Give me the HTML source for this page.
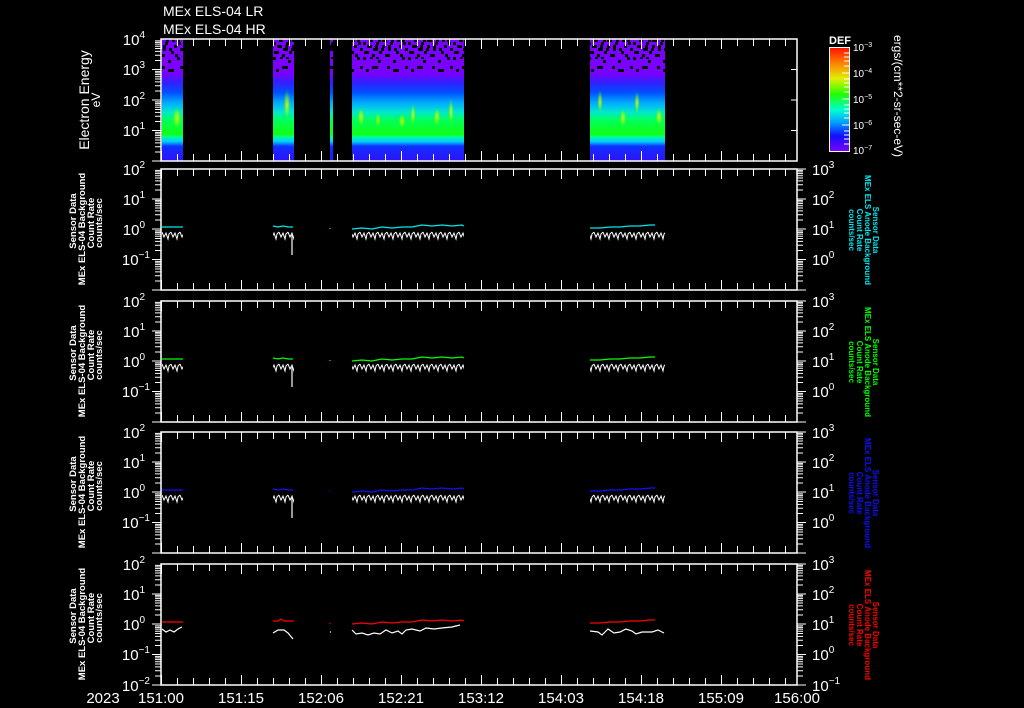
<!DOCTYPE html>
<html><head><meta charset="utf-8"><style>
html,body{margin:0;padding:0;background:#000;}
svg{display:block}
text{font-family:"Liberation Sans",sans-serif;fill:#fff}
</style></head><body>
<svg width="1024" height="708" viewBox="0 0 1024 708" xmlns="http://www.w3.org/2000/svg">
<defs>
<linearGradient id="sg" x1="0" y1="39" x2="0" y2="161" gradientUnits="userSpaceOnUse">
<stop offset="0" stop-color="#7a00ff"/>
<stop offset="0.28" stop-color="#7a00ff"/>
<stop offset="0.36" stop-color="#3020ff"/>
<stop offset="0.44" stop-color="#0050ff"/>
<stop offset="0.52" stop-color="#00a8ff"/>
<stop offset="0.6" stop-color="#00e8d0"/>
<stop offset="0.66" stop-color="#00ff60"/>
<stop offset="0.78" stop-color="#10ff10"/>
<stop offset="0.8" stop-color="#00ff90"/>
<stop offset="0.84" stop-color="#00d0ff"/>
<stop offset="0.88" stop-color="#1030ff"/>
<stop offset="1" stop-color="#3010ff"/>
</linearGradient>
<linearGradient id="cb" x1="0" y1="0" x2="0" y2="1">
<stop offset="0" stop-color="#ff1000"/>
<stop offset="0.15" stop-color="#ff8000"/>
<stop offset="0.3" stop-color="#e0f000"/>
<stop offset="0.45" stop-color="#20ff00"/>
<stop offset="0.6" stop-color="#00ffd0"/>
<stop offset="0.72" stop-color="#00a0ff"/>
<stop offset="0.85" stop-color="#1010ff"/>
<stop offset="1" stop-color="#8000ff"/>
</linearGradient>
<pattern id="spk" width="45" height="33" patternUnits="userSpaceOnUse">
<rect x="0" y="0" width="3" height="3"/><rect x="6" y="3" width="3" height="3"/><rect x="12" y="0" width="6" height="3"/><rect x="18" y="6" width="3" height="3"/><rect x="3" y="9" width="3" height="3"/><rect x="9" y="12" width="3" height="3"/><rect x="15" y="12" width="3" height="6"/><rect x="21" y="15" width="3" height="3"/><rect x="0" y="15" width="3" height="3"/><rect x="9" y="6" width="3" height="3"/>
<rect x="27" y="0" width="3" height="3"/><rect x="33" y="3" width="6" height="3"/><rect x="42" y="6" width="3" height="3"/><rect x="30" y="9" width="3" height="3"/><rect x="39" y="12" width="3" height="3"/><rect x="24" y="6" width="3" height="3"/><rect x="36" y="18" width="3" height="3"/><rect x="27" y="21" width="3" height="3"/><rect x="12" y="21" width="3" height="3"/><rect x="3" y="24" width="3" height="3"/><rect x="42" y="24" width="3" height="3"/><rect x="18" y="27" width="3" height="3"/><rect x="6" y="18" width="3" height="3"/><rect x="33" y="27" width="3" height="3"/>
</pattern>
<radialGradient id="yb"><stop offset="0" stop-color="#f0ff00"/><stop offset="0.5" stop-color="#a0ff00" stop-opacity="0.6"/><stop offset="1" stop-color="#00ff00" stop-opacity="0"/></radialGradient>
<pattern id="zw" width="9" height="14" patternUnits="userSpaceOnUse">
<polyline points="0,3 2,8 4,4 6,10 7,5 9,3" fill="none" stroke="#fff" stroke-width="1"/>
</pattern>
<g id="dl"><path d="M0,-9h-6M0,-14.3h-6M0,-18.1h-6M0,-21h-6M0,-23.3h-6M0,-25.4h-6M0,-27.1h-6M0,-28.6h-6M0,0h-9" stroke="#fff" stroke-width="1"/></g>
<g id="dr"><path d="M0,-9h6M0,-14.3h6M0,-18.1h6M0,-21h6M0,-23.3h6M0,-25.4h6M0,-27.1h6M0,-28.6h6M0,0h9" stroke="#fff" stroke-width="1"/></g>
<g id="tb">
<line x1="161" y1="3.5" x2="797" y2="3.5" stroke="#fff" stroke-width="7" stroke-dasharray="1 15"/>
<line x1="161" y1="5" x2="797" y2="5" stroke="#fff" stroke-width="10" stroke-dasharray="1 79"/>
</g>
</defs>

<text x="163" y="16" font-size="14">MEx ELS-04 LR</text>
<text x="163" y="34" font-size="14">MEx ELS-04 HR</text>

<g>
<rect x="162" y="39" width="21" height="122" fill="url(#sg)"/>
<rect x="273" y="39" width="21" height="122" fill="url(#sg)"/>
<rect x="330" y="39" width="3" height="122" fill="url(#sg)"/>
<rect x="352" y="39" width="112" height="122" fill="url(#sg)"/>
<rect x="590" y="39" width="75" height="122" fill="url(#sg)"/>
<rect x="160" y="39" width="510" height="33" fill="url(#spk)"/>
<rect x="150" y="39" width="520" height="20" fill="url(#spk)" transform="translate(13,0)"/>
<rect x="183" y="39" width="90" height="122" fill="#000"/>
<rect x="294" y="39" width="36" height="122" fill="#000"/>
<rect x="333" y="39" width="19" height="122" fill="#000"/>
<rect x="464" y="39" width="126" height="122" fill="#000"/>
<rect x="665" y="39" width="20" height="122" fill="#000"/>
<g opacity="0.85">
<ellipse cx="177" cy="118" rx="5" ry="12" fill="url(#yb)"/>
<ellipse cx="287" cy="105" rx="4" ry="16" fill="url(#yb)"/>
<ellipse cx="361" cy="117" rx="4" ry="10" fill="url(#yb)"/>
<ellipse cx="378" cy="120" rx="3" ry="8" fill="url(#yb)"/>
<ellipse cx="402" cy="121" rx="4" ry="8" fill="url(#yb)"/>
<ellipse cx="413" cy="115" rx="3" ry="12" fill="url(#yb)"/>
<ellipse cx="437" cy="117" rx="4" ry="10" fill="url(#yb)"/>
<ellipse cx="451" cy="112" rx="3" ry="14" fill="url(#yb)"/>
<ellipse cx="600" cy="102" rx="3" ry="12" fill="url(#yb)"/>
<ellipse cx="623" cy="118" rx="4" ry="10" fill="url(#yb)"/>
<ellipse cx="637" cy="103" rx="3" ry="12" fill="url(#yb)"/>
<ellipse cx="659" cy="117" rx="4" ry="10" fill="url(#yb)"/>
</g>
</g>

<g fill="none" stroke="#fff" stroke-width="1.5">
<rect x="161" y="39" width="636" height="122"/>
<rect x="161" y="169" width="636" height="121"/>
<rect x="161" y="301" width="636" height="121"/>
<rect x="161" y="432" width="636" height="121"/>
<rect x="161" y="564" width="636" height="121"/>
</g>
<use href="#tb" transform="translate(0,39)"/><use href="#tb" transform="translate(0,161) scale(1,-1)"/>
<use href="#tb" transform="translate(0,169)"/><use href="#tb" transform="translate(0,290) scale(1,-1)"/>
<use href="#tb" transform="translate(0,301)"/><use href="#tb" transform="translate(0,422) scale(1,-1)"/>
<use href="#tb" transform="translate(0,432)"/><use href="#tb" transform="translate(0,553) scale(1,-1)"/>
<use href="#tb" transform="translate(0,564)"/><use href="#tb" transform="translate(0,685) scale(1,-1)"/>

<g>
<use href="#dl" x="161" y="69.5"/><use href="#dl" x="161" y="100"/><use href="#dl" x="161" y="130.5"/><use href="#dl" x="161" y="161"/>
<use href="#dl" x="161" y="199"/><use href="#dl" x="161" y="229"/><use href="#dl" x="161" y="259.5"/><use href="#dl" x="161" y="290"/>
<use href="#dl" x="161" y="331"/><use href="#dl" x="161" y="361"/><use href="#dl" x="161" y="391.5"/><use href="#dl" x="161" y="422"/>
<use href="#dl" x="161" y="462"/><use href="#dl" x="161" y="492"/><use href="#dl" x="161" y="522.5"/><use href="#dl" x="161" y="553"/>
<use href="#dl" x="161" y="594"/><use href="#dl" x="161" y="624"/><use href="#dl" x="161" y="654.5"/><use href="#dl" x="161" y="685"/>
<use href="#dr" x="797" y="199"/><use href="#dr" x="797" y="229"/><use href="#dr" x="797" y="259.5"/><use href="#dr" x="797" y="290"/>
<use href="#dr" x="797" y="331"/><use href="#dr" x="797" y="361"/><use href="#dr" x="797" y="391.5"/><use href="#dr" x="797" y="422"/>
<use href="#dr" x="797" y="462"/><use href="#dr" x="797" y="492"/><use href="#dr" x="797" y="522.5"/><use href="#dr" x="797" y="553"/>
<use href="#dr" x="797" y="594"/><use href="#dr" x="797" y="624"/><use href="#dr" x="797" y="654.5"/><use href="#dr" x="797" y="685"/>
<path d="M797,169h9M797,301h9M797,432h9M797,564h9M797,39h-6M797,69.5h-6M797,100h-6M797,130.5h-6" stroke="#fff"/>
</g>

<g font-size="15" text-anchor="end">
<text x="145" y="45">10<tspan font-size="10" dy="-7">4</tspan></text>
<text x="145" y="75">10<tspan font-size="10" dy="-7">3</tspan></text>
<text x="145" y="106">10<tspan font-size="10" dy="-7">2</tspan></text>
<text x="145" y="136">10<tspan font-size="10" dy="-7">1</tspan></text>
<text x="145" y="175">10<tspan font-size="10" dy="-7">2</tspan></text>
<text x="145" y="205">10<tspan font-size="10" dy="-7">1</tspan></text>
<text x="145" y="235">10<tspan font-size="10" dy="-7">0</tspan></text>
<text x="150" y="265">10<tspan font-size="10" dy="-7">−1</tspan></text>
<text x="145" y="307">10<tspan font-size="10" dy="-7">2</tspan></text>
<text x="145" y="337">10<tspan font-size="10" dy="-7">1</tspan></text>
<text x="145" y="367">10<tspan font-size="10" dy="-7">0</tspan></text>
<text x="150" y="397">10<tspan font-size="10" dy="-7">−1</tspan></text>
<text x="145" y="438">10<tspan font-size="10" dy="-7">2</tspan></text>
<text x="145" y="468">10<tspan font-size="10" dy="-7">1</tspan></text>
<text x="145" y="498">10<tspan font-size="10" dy="-7">0</tspan></text>
<text x="150" y="528">10<tspan font-size="10" dy="-7">−1</tspan></text>
<text x="145" y="570">10<tspan font-size="10" dy="-7">2</tspan></text>
<text x="145" y="600">10<tspan font-size="10" dy="-7">1</tspan></text>
<text x="145" y="630">10<tspan font-size="10" dy="-7">0</tspan></text>
<text x="150" y="660">10<tspan font-size="10" dy="-7">−1</tspan></text>
<text x="150" y="691">10<tspan font-size="10" dy="-7">−2</tspan></text>
</g>
<g font-size="15">
<text x="812" y="175">10<tspan font-size="10" dy="-7">3</tspan></text>
<text x="812" y="205">10<tspan font-size="10" dy="-7">2</tspan></text>
<text x="812" y="235">10<tspan font-size="10" dy="-7">1</tspan></text>
<text x="812" y="265">10<tspan font-size="10" dy="-7">0</tspan></text>
<text x="812" y="307">10<tspan font-size="10" dy="-7">3</tspan></text>
<text x="812" y="337">10<tspan font-size="10" dy="-7">2</tspan></text>
<text x="812" y="367">10<tspan font-size="10" dy="-7">1</tspan></text>
<text x="812" y="397">10<tspan font-size="10" dy="-7">0</tspan></text>
<text x="812" y="438">10<tspan font-size="10" dy="-7">3</tspan></text>
<text x="812" y="468">10<tspan font-size="10" dy="-7">2</tspan></text>
<text x="812" y="498">10<tspan font-size="10" dy="-7">1</tspan></text>
<text x="812" y="528">10<tspan font-size="10" dy="-7">0</tspan></text>
<text x="812" y="570">10<tspan font-size="10" dy="-7">3</tspan></text>
<text x="812" y="600">10<tspan font-size="10" dy="-7">2</tspan></text>
<text x="812" y="630">10<tspan font-size="10" dy="-7">1</tspan></text>
<text x="812" y="660">10<tspan font-size="10" dy="-7">0</tspan></text>
<text x="812" y="691">10<tspan font-size="10" dy="-7">−1</tspan></text>
</g>

<g font-size="14" text-anchor="middle" transform="translate(89,100) rotate(-90)"><text x="0" y="0">Electron Energy</text><text x="0" y="11" font-size="12">eV</text></g>
<g font-size="9.5" font-weight="bold" text-anchor="middle">
<g transform="translate(0,229)"><text transform="translate(76,-8) rotate(-90)">Sensor Data</text><text transform="translate(85,0) rotate(-90)">MEx ELS-04 Background</text><text transform="translate(94,-6) rotate(-90)">Count Rate</text><text transform="translate(102,-6) rotate(-90)">counts/sec</text></g>
<g transform="translate(0,361)"><text transform="translate(76,-8) rotate(-90)">Sensor Data</text><text transform="translate(85,0) rotate(-90)">MEx ELS-04 Background</text><text transform="translate(94,-6) rotate(-90)">Count Rate</text><text transform="translate(102,-6) rotate(-90)">counts/sec</text></g>
<g transform="translate(0,492)"><text transform="translate(76,-8) rotate(-90)">Sensor Data</text><text transform="translate(85,0) rotate(-90)">MEx ELS-04 Background</text><text transform="translate(94,-6) rotate(-90)">Count Rate</text><text transform="translate(102,-6) rotate(-90)">counts/sec</text></g>
<g transform="translate(0,624)"><text transform="translate(76,-8) rotate(-90)">Sensor Data</text><text transform="translate(85,0) rotate(-90)">MEx ELS-04 Background</text><text transform="translate(94,-6) rotate(-90)">Count Rate</text><text transform="translate(102,-6) rotate(-90)">counts/sec</text></g>
</g>
<g font-size="8" font-weight="bold" text-anchor="middle">
<g transform="translate(0,230)"><text style="fill:#00e8f0" transform="translate(873,0) rotate(90)">Sensor Data</text><text style="fill:#00e8f0" transform="translate(865,0) rotate(90)">MEx ELS Anode Background</text><text style="fill:#00e8f0" transform="translate(857,0) rotate(90)">Count Rate</text><text style="fill:#00e8f0" transform="translate(849,0) rotate(90)">counts/sec</text></g>
<g transform="translate(0,362)"><text style="fill:#00ff00" transform="translate(873,0) rotate(90)">Sensor Data</text><text style="fill:#00ff00" transform="translate(865,0) rotate(90)">MEx ELS Anode Background</text><text style="fill:#00ff00" transform="translate(857,0) rotate(90)">Count Rate</text><text style="fill:#00ff00" transform="translate(849,0) rotate(90)">counts/sec</text></g>
<g transform="translate(0,493)"><text style="fill:#1010ff" transform="translate(873,0) rotate(90)">Sensor Data</text><text style="fill:#1010ff" transform="translate(865,0) rotate(90)">MEx ELS Anode Background</text><text style="fill:#1010ff" transform="translate(857,0) rotate(90)">Count Rate</text><text style="fill:#1010ff" transform="translate(849,0) rotate(90)">counts/sec</text></g>
<g transform="translate(0,625)"><text style="fill:#ff0000" transform="translate(873,0) rotate(90)">Sensor Data</text><text style="fill:#ff0000" transform="translate(865,0) rotate(90)">MEx ELS Anode Background</text><text style="fill:#ff0000" transform="translate(857,0) rotate(90)">Count Rate</text><text style="fill:#ff0000" transform="translate(849,0) rotate(90)">counts/sec</text></g>
</g>

<text x="829" y="44" font-size="11" font-weight="bold">DEF</text>
<rect x="829.5" y="47.5" width="20" height="104" fill="url(#cb)" stroke="#fff"/>
<path d="M849,73h-7M849,99h-7M849,125h-7M849,53h-5M849,57h-5M849,61h-5M849,66h-5M849,79h-5M849,83h-5M849,87h-5M849,92h-5M849,105h-5M849,109h-5M849,113h-5M849,118h-5M849,131h-5M849,135h-5M849,139h-5M849,144h-5" stroke="#fff"/>
<g font-size="10"><text x="853" y="51">10<tspan font-size="7" dy="-4">−3</tspan></text><text x="853" y="77">10<tspan font-size="7" dy="-4">−4</tspan></text><text x="853" y="103">10<tspan font-size="7" dy="-4">−5</tspan></text><text x="853" y="129">10<tspan font-size="7" dy="-4">−6</tspan></text><text x="853" y="154">10<tspan font-size="7" dy="-4">−7</tspan></text></g>
<text font-size="12" text-anchor="middle" transform="translate(894,96) rotate(90)">ergs/(cm**2-sr-sec-eV)</text>

<g fill="none" stroke-width="1.2">
<g transform="translate(0,229)">
<path stroke="#00e8f0" d="M162,-2h21M273,-3l5,1l5,-1l5,1l5,0M330,-1v1M352,0l10,-1l10,1l10,-2l10,1l10,-1l10,0l10,-2l10,1l10,-1l10,1l10,-1l2,1M590,-1l10,0l10,-1l10,0l10,-1l10,0l10,-1l5,0"/>
<rect x="162" y="0" width="21" height="13" fill="url(#zw)" stroke="none"/>
<rect x="273" y="0" width="21" height="13" fill="url(#zw)" stroke="none"/>
<path stroke="#fff" d="M292,6v20"/>
<rect x="352" y="-1" width="112" height="13" fill="url(#zw)" stroke="none"/>
<rect x="590" y="-1" width="75" height="13" fill="url(#zw)" stroke="none"/>
</g>
<g transform="translate(0,361)">
<path stroke="#00ff00" d="M162,-2h21M273,-3l5,1l5,-1l5,1l5,0M330,-1v1M352,0l10,-1l10,1l10,-2l10,1l10,-1l10,0l10,-2l10,1l10,-1l10,1l10,-1l2,1M590,-1l10,0l10,-1l10,0l10,-1l10,0l10,-1l5,0"/>
<rect x="162" y="0" width="21" height="13" fill="url(#zw)" stroke="none"/>
<rect x="273" y="0" width="21" height="13" fill="url(#zw)" stroke="none"/>
<path stroke="#fff" d="M292,6v20"/>
<rect x="352" y="-1" width="112" height="13" fill="url(#zw)" stroke="none"/>
<rect x="590" y="-1" width="75" height="13" fill="url(#zw)" stroke="none"/>
</g>
<g transform="translate(0,492)">
<path stroke="#1010ff" d="M162,-2h21M273,-3l5,1l5,-1l5,1l5,0M330,-1v1M352,0l10,-1l10,1l10,-2l10,1l10,-1l10,0l10,-2l10,1l10,-1l10,1l10,-1l2,1M590,-1l10,0l10,-1l10,0l10,-1l10,0l10,-1l5,0"/>
<rect x="162" y="0" width="21" height="13" fill="url(#zw)" stroke="none"/>
<rect x="273" y="0" width="21" height="13" fill="url(#zw)" stroke="none"/>
<path stroke="#fff" d="M292,6v20"/>
<rect x="352" y="-1" width="112" height="13" fill="url(#zw)" stroke="none"/>
<rect x="590" y="-1" width="75" height="13" fill="url(#zw)" stroke="none"/>
</g>
<g transform="translate(0,624)">
<path stroke="#ff0000" d="M162,-2h21M273,-3l5,0l3,-2l3,2l10,0M330,-1v1M352,0l10,-1l10,1l10,-2l10,1l10,-1l10,0l10,-2l10,1l10,-1l10,1l10,-1l2,1M590,-1l10,0l10,-1l10,0l10,-1l10,0l10,-1l5,0"/>
<path stroke="#fff" d="M162,5l4,3l4,-2l4,2l4,-3l4,-2M273,9l5,-3l6,0l4,3l5,6M330,8h1M352,6l4,4l6,-1l6,2l6,-2l6,1l6,-4l6,3l6,-2l4,3l4,-4l6,-1l8,2l6,-3l8,1l8,-1l10,-1l8,-2M590,7l8,1l4,3l6,-6l6,4l6,-1l6,-3l6,2l4,3l6,-2l10,0l6,-2l6,3"/>
</g>
</g>

<g font-size="15" text-anchor="middle">
<text x="103" y="703">2023</text>
<text x="161" y="703">151:00</text>
<text x="241" y="703">151:15</text>
<text x="321" y="703">152:06</text>
<text x="401" y="703">152:21</text>
<text x="481" y="703">153:12</text>
<text x="561" y="703">154:03</text>
<text x="641" y="703">154:18</text>
<text x="721" y="703">155:09</text>
<text x="797" y="703">156:00</text>
</g>
</svg>
</body></html>
